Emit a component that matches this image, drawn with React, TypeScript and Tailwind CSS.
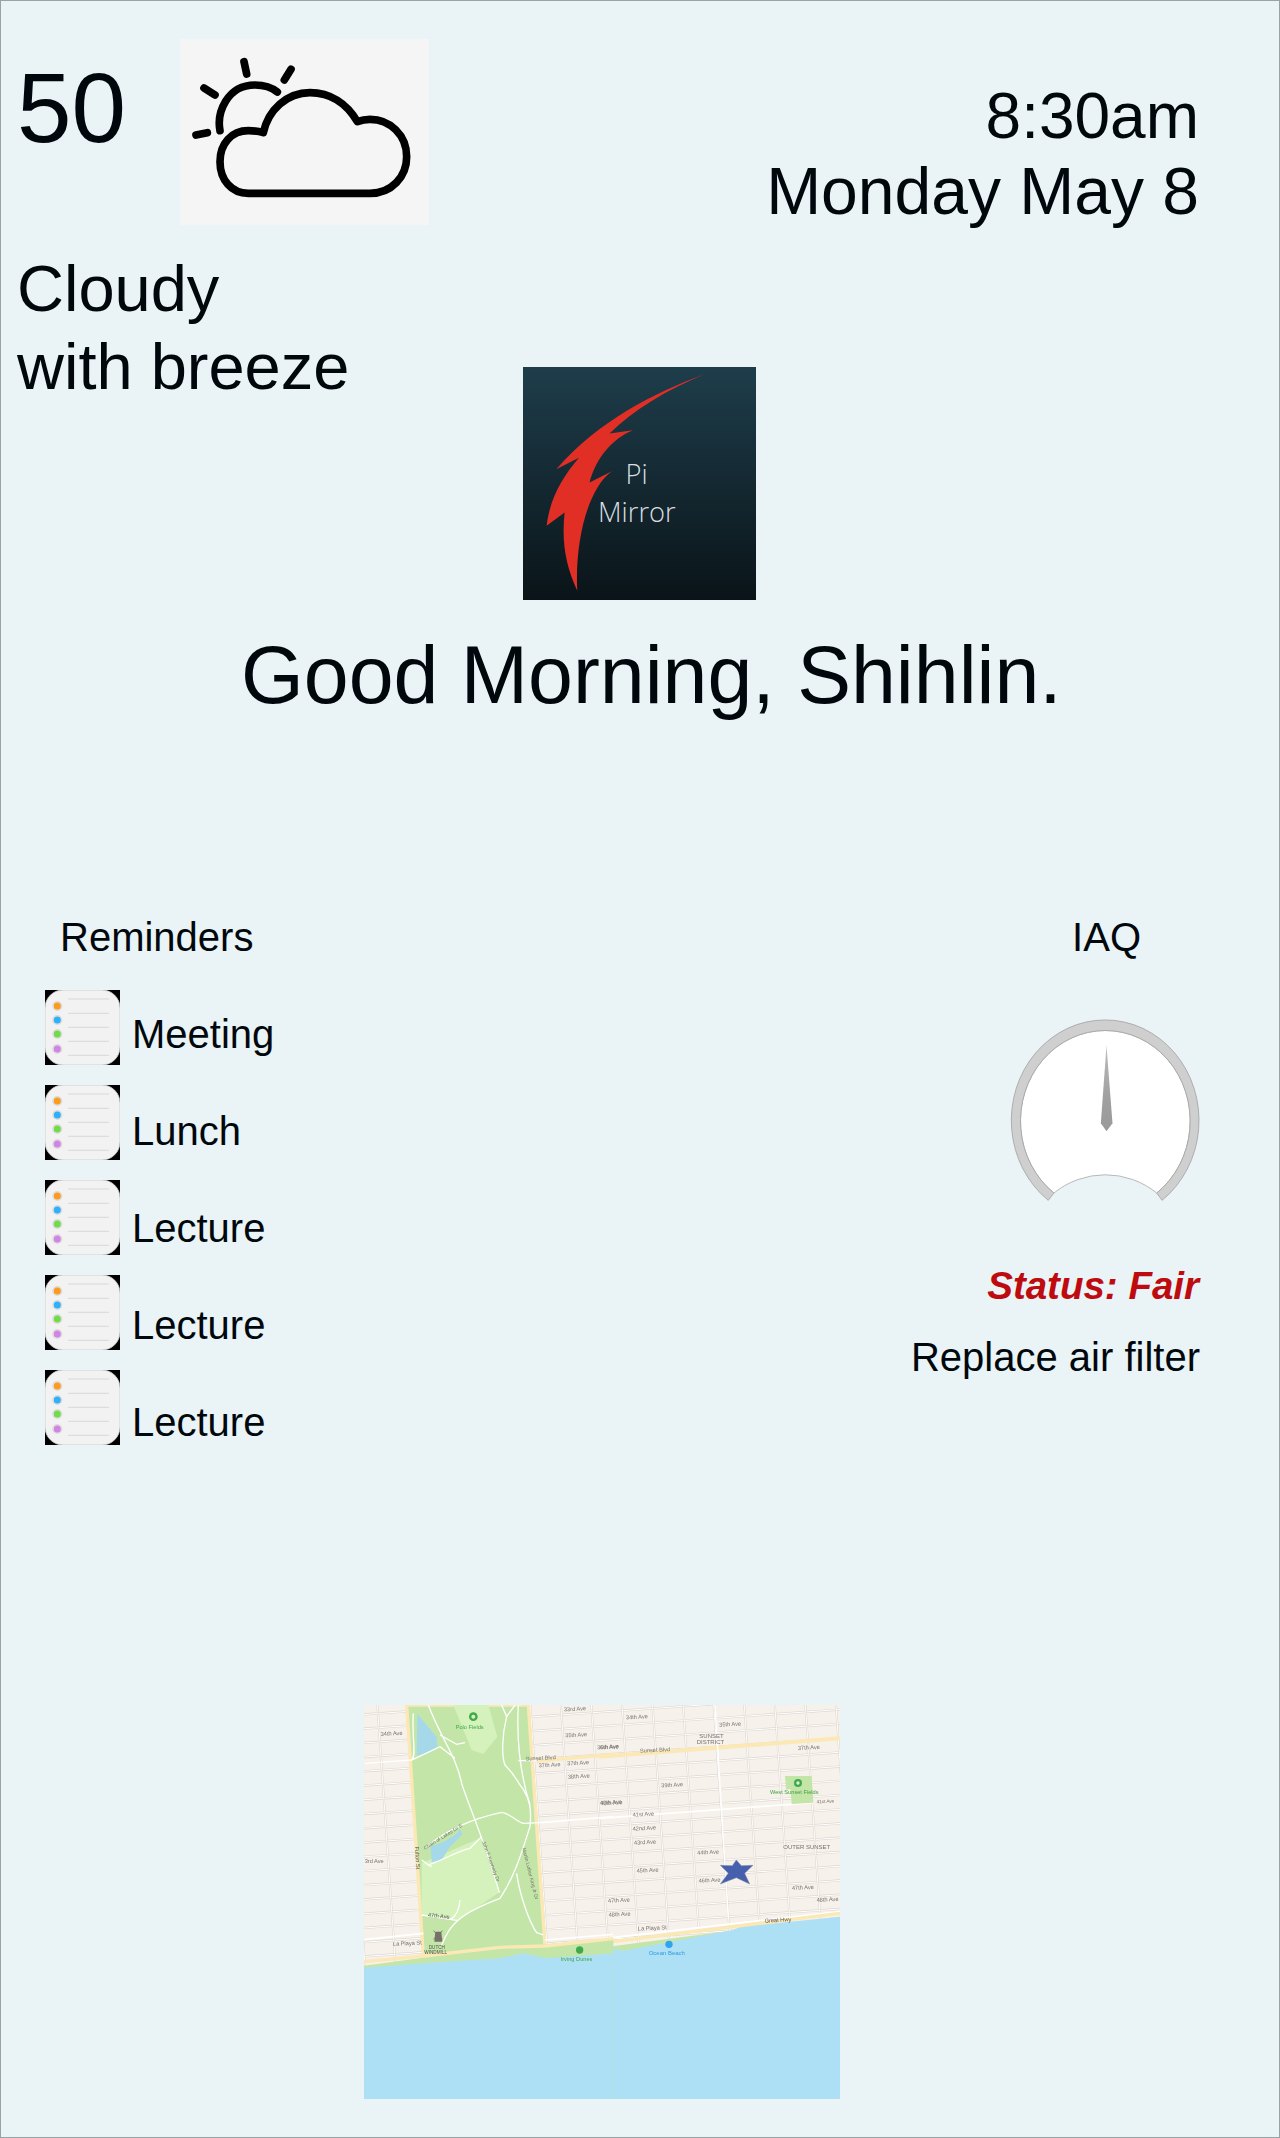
// App.tsx
import React from 'react';

const WeatherIcon: React.FC = () => (
  <svg viewBox="540 117 747 558" className="w-[249px] h-[186px] bg-[#f5f5f5] shrink-0">
    <g fill="none" stroke="#000" strokeWidth="23" strokeLinecap="round" strokeLinejoin="round">
      <path d="M745 580 L1110 580 C1175 580 1220 530 1220 470 C1220 405 1170 358 1110 358 C1095 358 1085 360 1072 365 C1040 310 990 278 930 278 C860 278 805 330 790 398 C770 392 755 392 745 392 C695 392 660 430 660 485 C660 540 695 580 745 580 Z" />
      <path d="M660 392 C650 340 680 255 765 255 C790 255 815 262 832 276" />
      <path d="M732 185 L740 222 M873 208 L853 240 M612 264 L645 285 M588 405 L622 398" />
    </g>
  </svg>
);

const LogoIcon: React.FC = () => (
  <svg viewBox="70 50 700 700" className="w-[233px] h-[233px] shrink-0">
    <defs>
      <linearGradient id="logoBg" x1="0" y1="0" x2="0" y2="1">
        <stop offset="0" stopColor="#1e3d4b" />
        <stop offset="1" stopColor="#0a1418" />
      </linearGradient>
    </defs>
    <rect x="70" y="50" width="700" height="700" fill="url(#logoBg)" />
    <path
      d="M615 72 C500 120 400 180 330 250 L400 240 C340 265 290 320 270 397 L337 363 C270 410 225 560 233 722 C200 650 185 580 195 487 L141 527 C150 450 185 385 238 323 L170 357 C300 210 460 130 615 72 Z"
      fill="#e22f26"
    />
    <g fill="#d7dde0" fontFamily="'Open Sans', sans-serif" fontWeight="300" fontSize="82" textAnchor="middle">
      <text x="411" y="403">Pi</text>
      <text x="412" y="515">Mirror</text>
    </g>
  </svg>
);

const ReminderIcon: React.FC = () => (
  <svg viewBox="0 0 75 75" className="w-[75px] h-[75px] shrink-0">
    <rect width="75" height="75" fill="#000" />
    <rect width="75" height="75" rx="18" fill="#f2f2f2" stroke="#c9c9c9" strokeWidth="0.8" />
    {[9, 23.3, 37.3, 51.3, 65.3].map((y) => (
      <line key={y} x1="23" x2="64" y1={y} y2={y} stroke="#d8d8d8" strokeWidth="1" />
    ))}
    {[
      [16, '#fd9b1f'],
      [30, '#2fb0fa'],
      [44, '#70dc48'],
      [59, '#d184e6'],
    ].map(([y, c]) => (
      <circle key={c as string} cx="12.3" cy={y as number} r="4.3" fill={c as string} stroke="#dcdcdc" strokeWidth="1.6" />
    ))}
  </svg>
);

const Gauge: React.FC = () => (
  <svg viewBox="90 50 580 560" className="w-[193px] h-[187px]">
    <defs>
      <linearGradient id="needle" x1="0" y1="0" x2="0" y2="1">
        <stop offset="0" stopColor="#bdbdbd" />
        <stop offset="0.6" stopColor="#a0a0a0" />
        <stop offset="1" stopColor="#9a9a9a" />
      </linearGradient>
    </defs>
    <path d="M225 578 A255 272 0 1 1 534 578 A245 245 0 0 0 225 578 Z" fill="#fff" stroke="#999" strokeWidth="2" />
    <path d="M208 600 A282 302 0 1 1 550 600 L534 578 A255 272 0 1 0 225 578 Z" fill="#cfcfcf" stroke="#a3a3a3" strokeWidth="2.5" />
    <path d="M383 135 L401 368 L383 392 L366 368 Z" fill="url(#needle)" />
  </svg>
);

const h = Array.from({ length: 34 }, (_, i) => i);
const v = Array.from({ length: 20 }, (_, i) => i);

const MapLabel: React.FC<{ x: number; y: number; t: string; r?: number; c?: string; s?: number }> = ({ x, y, t, r = -3, c = '#77736f', s = 17 }) => (
  <text x={x} y={y} fontSize={s} fill={c} transform={`rotate(${r} ${x} ${y})`}>
    {t}
  </text>
);

const MapView: React.FC = () => (
  <svg viewBox="364 1705 476 394" className="w-[476px] h-[394px] block blur-[0.4px]">
    <rect x="364" y="1705" width="476" height="394" fill="#f6f1ea" />
    {/* street grid */}
    <g transform="rotate(-4 600 1900)">
      {h.map((i) => (
        <line key={i} x1="300" x2="900" y1={1670 + i * 14.2} y2={1670 + i * 14.2} stroke="#dcd6ce" strokeWidth="2.2" />
      ))}
      {h.map((i) => (
        <line key={i} x1="300" x2="900" y1={1670 + i * 14.2} y2={1670 + i * 14.2} stroke="#fff" strokeWidth="1" />
      ))}
      {v.map((i) => (
        <line key={i} x1={300 + i * 30.5} x2={300 + i * 30.5} y1="1650" y2="2100" stroke="#dcd6ce" strokeWidth="2" />
      ))}
      {v.map((i) => (
        <line key={i} x1={300 + i * 30.5} x2={300 + i * 30.5} y1="1650" y2="2100" stroke="#fff" strokeWidth="0.9" />
      ))}
    </g>

    <g transform="translate(600 1700) scale(0.3333)">
      <path d="M-5 718 L720 635" stroke="#fff" strokeWidth="6" />
      <path d="M-5 170 L720 115" stroke="#fbe8b5" strokeWidth="12" />
      <path d="M0 355 L640 308" stroke="#fff" strokeWidth="5" />
      <path d="M345 15 L385 655" stroke="#fff" strokeWidth="4" />
      <path d="M555 228 L635 228 L640 308 L575 312 L572 268 L558 268 Z" fill="#c3e6a8" />
      <circle cx="594" cy="249" r="12" fill="#3faa4d" />
      <circle cx="594" cy="249" r="5" fill="#dff2d3" />
      <path d="M-10 745 L720 650 L720 1300 L-10 1300 Z" fill="#c3e6a8" />
      <path d="M-10 760 L30 745 L70 752 L400 690 L420 680 L720 650 L720 1300 L-10 1300 Z" fill="#aee0f5" />
      <path d="M-5 730 L720 640" stroke="#fbe8b5" strokeWidth="10" />
      <MapLabel x={78} y={58} t="34th Ave" />
      <MapLabel x={358} y={80} t="35th Ave" />
      <MapLabel x={0} y={148} t="6th Ave" />
      <MapLabel x={120} y={158} t="Sunset Blvd" />
      <MapLabel x={594} y={150} t="37th Ave" />
      <MapLabel x={298} y={113} t="SUNSET" r={0} s={18} />
      <MapLabel x={290} y={132} t="DISTRICT" r={0} s={18} />
      <MapLabel x={184} y={262} t="39th Ave" />
      <MapLabel x={0} y={314} t="40th Ave" />
      <MapLabel x={98} y={350} t="41st Ave" />
      <MapLabel x={650} y={310} t="41st Ave" s={14} />
      <MapLabel x={98} y={392} t="42nd Ave" />
      <MapLabel x={102} y={434} t="43rd Ave" />
      <MapLabel x={292} y={464} t="44th Ave" />
      <MapLabel x={110} y={518} t="45th Ave" />
      <MapLabel x={296} y={548} t="46th Ave" />
      <MapLabel x={576} y={570} t="47th Ave" />
      <MapLabel x={24} y={608} t="47th Ave" />
      <MapLabel x={26} y={650} t="48th Ave" />
      <MapLabel x={650} y={606} t="48th Ave" />
      <MapLabel x={114} y={692} t="La Playa St" />
      <MapLabel x={494} y={668} t="Great Hwy" c="#55514d" />
      <MapLabel x={510} y={282} t="West Sunset Fields" r={0} c="#3f9f3f" s={17} />
      <MapLabel x={550} y={448} t="OUTER SUNSET" r={0} s={18} />
      <circle cx="207" cy="733" r="11" fill="#2ea3ee" />
      <MapLabel x={146} y={766} t="Ocean Beach" r={0} c="#2e9be0" s={18} />
      <path d="M409 480 L424 497 L459 496 L434 520 L449 552 L409 533 L361 552 L385 520 L361 496 L397 497 Z" fill="#4760ad" stroke="#7d87a8" strokeWidth="1.5" />
    </g>

    <g transform="translate(360 1700) scale(0.3333)">
      <path d="M530 183 L760 163" stroke="#fbe8b5" strokeWidth="10" />
      <path d="M540 368 L760 350" stroke="#fff" strokeWidth="5" />
      <path d="M140 15 L505 15 L555 738 L190 768 Z" fill="#c3e6a8" stroke="#fbe8b5" strokeWidth="10" />
      <path d="M280 15 L335 150 L370 162 L412 110 L385 15 Z" fill="#d6f2bc" />
      <path d="M185 490 L360 415 L420 575 L295 660 L185 645 Z" fill="#d6f2bc" />
      <path d="M172 42 L230 110 L232 140 L190 165 L170 165 Z" fill="#a5d9ea" />
      <path d="M300 388 L308 402 L270 440 L245 480 L215 487 L212 440 L250 425 L285 405 Z" fill="#a5d9ea" />
      <g fill="none" stroke="#fff" strokeWidth="4">
        <path d="M205 15 C240 110 290 170 305 250 C320 300 380 440 418 578" />
        <path d="M15 190 L155 180 L240 140 L285 175 M240 105 L290 133 L315 128 M160 40 C155 110 170 170 155 180" />
        <path d="M425 15 L440 50 C425 110 425 170 435 195 C470 230 480 260 490 268 C510 300 515 330 510 380 C490 440 470 520 420 595 C380 610 330 630 295 660 C270 680 255 710 245 735" />
        <path d="M475 15 C470 110 480 220 510 315 M465 15 L440 50" />
        <path d="M475 182 L530 182 M185 480 L205 495 C250 480 300 450 330 445 L365 410 M205 495 L215 500" />
        <path d="M200 440 C260 390 340 355 425 337 C450 340 470 365 490 370 L540 368" />
        <path d="M185 645 L295 662 M300 600 C298 630 285 650 272 658" />
        <path d="M470 520 C480 590 510 670 530 698 L550 705" />
      </g>
      <path d="M-5 800 L420 742 L760 718 L760 1300 L-5 1300 Z" fill="#c3e6a8" />
      <path d="M-5 805 L190 790 L420 775 L490 760 L560 775 L760 760 L760 1300 L-5 1300 Z" fill="#aee0f5" />
      <path d="M10 785 L190 768 L420 742 L555 738 L760 716" fill="none" stroke="#fbe8b5" strokeWidth="10" />
      <path d="M0 720 L190 700 M555 720 L760 703" stroke="#fff" strokeWidth="5" fill="none" />
      <circle cx="340" cy="50" r="13" fill="#3faa4d" />
      <circle cx="340" cy="50" r="6" fill="#d6f2bc" />
      <MapLabel x={287} y={87} t="Polo Fields" r={0} c="#3fa84a" s={17} />
      <MapLabel x={62} y={108} t="34th Ave" />
      <MapLabel x={612} y={34} t="33rd Ave" />
      <MapLabel x={616} y={112} t="35th Ave" />
      <MapLabel x={712} y={148} t="36th Ave" />
      <MapLabel x={497} y={182} t="Sunset Blvd" />
      <MapLabel x={536} y={202} t="37th Ave" />
      <MapLabel x={622} y={196} t="37th Ave" />
      <MapLabel x={624} y={236} t="38th Ave" />
      <MapLabel x={722} y={316} t="40th Ave" />
      <MapLabel x={14} y={490} t="3rd Ave" r={0} />
      <MapLabel x={195} y={450} t="Chain of Lakes Dr E" r={-32} s={15} />
      <MapLabel x={366} y={425} t="John F Kennedy Dr" r={70} s={15} />
      <MapLabel x={487} y={445} t="Martin Luther King Jr Dr" r={76} s={15} />
      <MapLabel x={165} y={440} t="Fulton St" r={87} c="#55514d" />
      <MapLabel x={203} y={650} t="47th Ave" r={6} c="#55514d" />
      <MapLabel x={99} y={738} t="La Playa St" />
      <path d="M226 695 L244 695 L247 725 L223 725 Z" fill="#77706a" />
      <path d="M220 692 L248 718 M248 692 L220 718" stroke="#77706a" strokeWidth="2.5" />
      <MapLabel x={206} y={746} t="DUTCH" r={0} c="#55514d" s={14} />
      <MapLabel x={193} y={762} t="WINDMILL" r={0} c="#55514d" s={14} />
      <circle cx="659" cy="750" r="11" fill="#3faa4d" />
      <MapLabel x={602} y={782} t="Irving Dunes" r={0} c="#3fa84a" s={17} />
    </g>
  </svg>
);

const reminders = ['Meeting', 'Lunch', 'Lecture', 'Lecture', 'Lecture'];

const App: React.FC = () => {
  return (
    <div className="w-[1280px] h-[2138px] bg-[#eaf3f6] border border-[#98a3a8] text-[#01080d] font-['Liberation_Sans',Arial,sans-serif] overflow-hidden">
      <div className="flex h-[600px] items-start">
        <div className="w-[522px] shrink-0 pl-4 pt-[38px]">
          <div className="flex items-start">
            <div className="w-[163px] text-[98px] leading-none pt-[20px]">50</div>
            <WeatherIcon />
          </div>
          <div className="text-[65px] leading-[78px] mt-[25px]">
            Cloudy
            <br />
            with breeze
          </div>
        </div>
        <div className="mt-[366px]">
          <LogoIcon />
        </div>
        <div className="flex-1 pr-[80px] pt-[77px] text-right text-[66px] leading-[75px] whitespace-nowrap">
          <span className="text-[64px]">8:30am</span>
          <br />
          Monday May 8
        </div>
      </div>

      <h1 className="text-[80.7px] leading-none pl-[240px] pt-[34px] font-normal">Good Morning, Shihlin.</h1>

      <div className="flex justify-between mt-[198px] h-[791px]">
        <div className="pl-[44px]">
          <div className="text-[40px] leading-[46px] pl-[15px]">Reminders</div>
          <div className="flex flex-col gap-[20px] mt-[30px]">
            {reminders.map((r, i) => (
              <div key={i} className="flex items-end gap-3">
                <ReminderIcon />
                <span className="text-[40px] leading-[46px]" style={{ marginBottom: 8 - i * 2 }}>
                  {r}
                </span>
              </div>
            ))}
          </div>
        </div>
        <div className="pr-[79px] flex flex-col items-end text-[40px] leading-[46px]">
          <div className="pr-[59px]">IAQ</div>
          <div className="mt-[57px] -mr-[2px]">
            <Gauge />
          </div>
          <div className="mt-[59px] pr-[1px] font-bold italic text-[38.5px] text-[#be0b0f]">Status: Fair</div>
          <div className="mt-[25px]">Replace air filter</div>
        </div>
      </div>

      <div className="ml-[363px]">
        <MapView />
      </div>
    </div>
  );
};

export default App;
